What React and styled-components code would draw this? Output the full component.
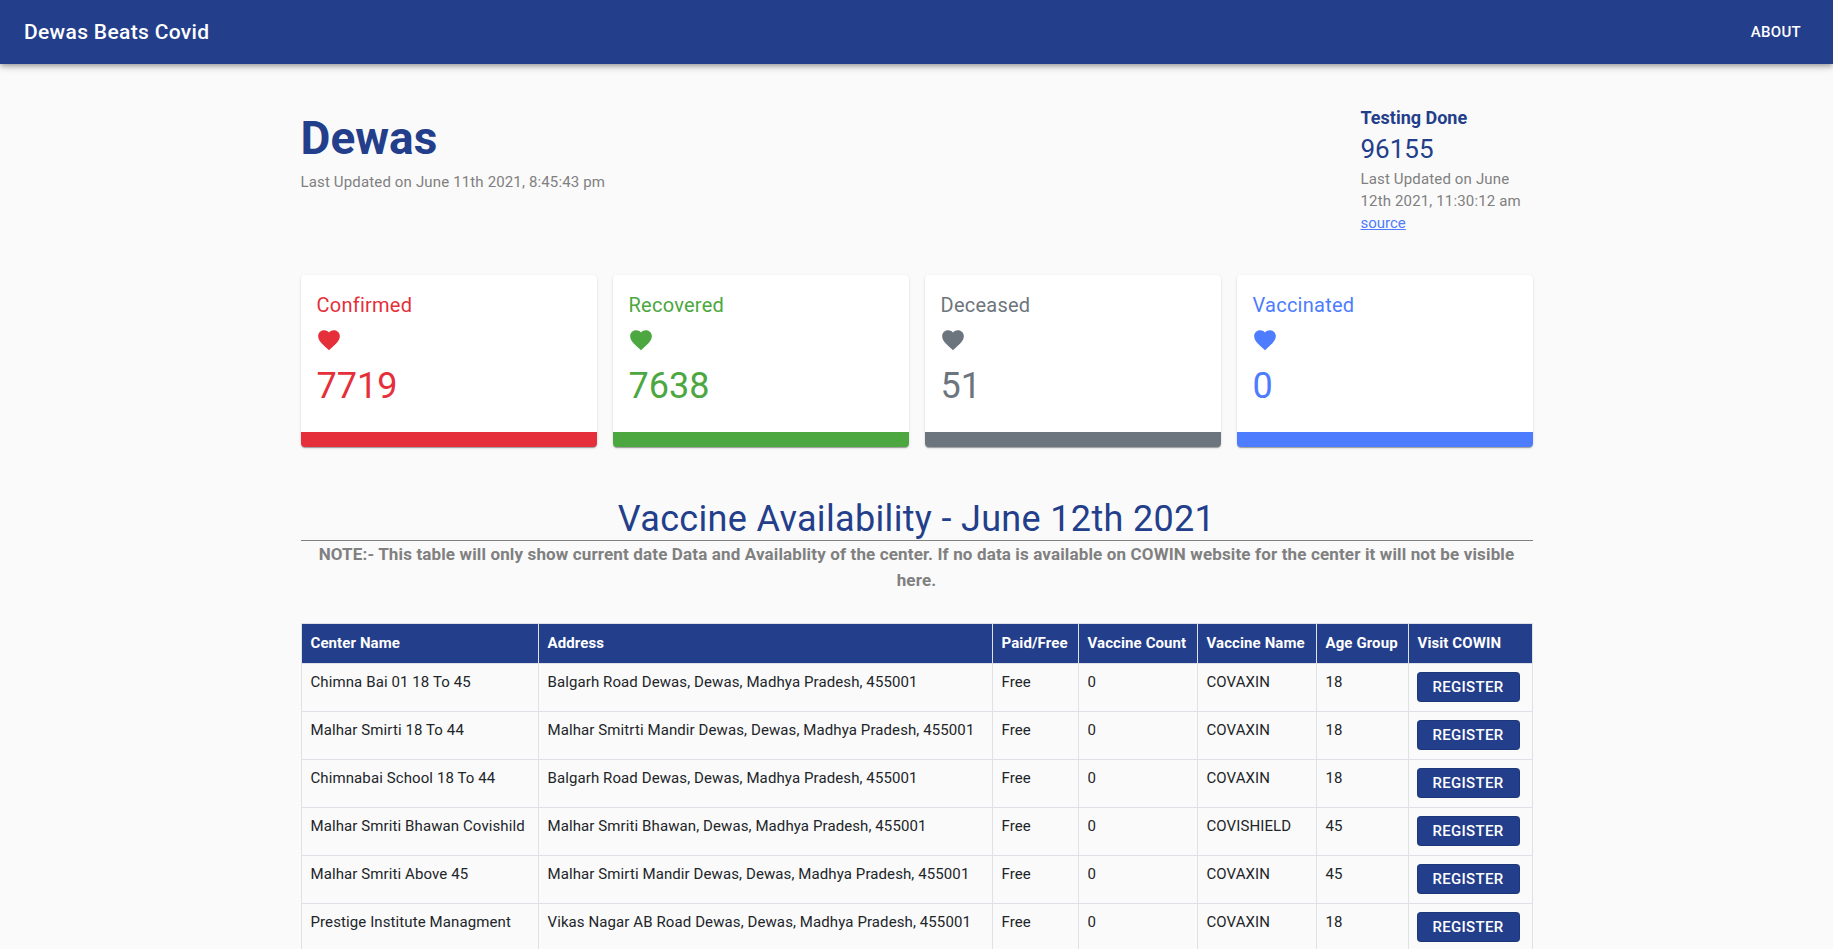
import styled, {createGlobalStyle} from 'styled-components';

const navy = '#233e8b';

const centers = [
  ['Chimna Bai 01 18 To 45', 'Balgarh Road Dewas, Dewas, Madhya Pradesh, 455001', 'COVAXIN', 18],
  ['Malhar Smirti 18 To 44', 'Malhar Smitrti Mandir Dewas, Dewas, Madhya Pradesh, 455001', 'COVAXIN', 18],
  ['Chimnabai School 18 To 44', 'Balgarh Road Dewas, Dewas, Madhya Pradesh, 455001', 'COVAXIN', 18],
  ['Malhar Smriti Bhawan Covishild', 'Malhar Smriti Bhawan, Dewas, Madhya Pradesh, 455001', 'COVISHIELD', 45],
  ['Malhar Smriti Above 45', 'Malhar Smirti Mandir Dewas, Dewas, Madhya Pradesh, 455001', 'COVAXIN', 45],
  ['Prestige Institute Managment', 'Vikas Nagar AB Road Dewas, Dewas, Madhya Pradesh, 455001', 'COVAXIN', 18],
];

const stats = [
  {label: 'Confirmed', value: 7719, color: '#e52f3a'},
  {label: 'Recovered', value: 7638, color: '#4ca741'},
  {label: 'Deceased', value: 51, color: '#6c757d'},
  {label: 'Vaccinated', value: 0, color: '#4d7cfe'},
];

const columns = [
  ['Center Name', 237],
  ['Address', 454],
  ['Paid/Free', 86],
  ['Vaccine Count', 119],
  ['Vaccine Name', 119],
  ['Age Group', 92],
  ['Visit COWIN', 124],
];

export default function App() {
  return (
    <>
      <GlobalStyle />
      <NavBar>
        <Brand>Dewas Beats Covid</Brand>
        <NavButton>About</NavButton>
      </NavBar>
      <Main>
        <Header>
          <div>
            <Title>Dewas</Title>
            <Muted>Last Updated on June 11th 2021, 8:45:43 pm</Muted>
          </div>
          <Testing>
            <TestingLabel>Testing Done</TestingLabel>
            <TestingValue>96155</TestingValue>
            <Muted>Last Updated on June 12th 2021, 11:30:12 am</Muted>
            <Source href="#">source</Source>
          </Testing>
        </Header>
        <Cards>
          {stats.map(stat => (
            <Card key={stat.label} $color={stat.color}>
              <CardBody>
                <CardLabel>{stat.label}</CardLabel>
                <Heart viewBox="0 0 24 24">
                  <path d="M12 21.35l-1.45-1.32C5.4 15.36 2 12.28 2 8.5 2 5.42 4.42 3 7.5 3c1.74 0 3.41.81 4.5 2.09C13.09 3.81 14.76 3 16.5 3 19.58 3 22 5.42 22 8.5c0 3.78-3.4 6.86-8.55 11.54L12 21.35z" />
                </Heart>
                <CardValue>{stat.value}</CardValue>
              </CardBody>
            </Card>
          ))}
        </Cards>
        <Heading>Vaccine Availability - June 12th 2021</Heading>
        <Note>
          NOTE:- This table will only show current date Data and Availablity of the center. If no data is available on
          COWIN website for the center it will not be visible here.
        </Note>
        <Table>
          <colgroup>
            {columns.map(([name, width]) => (
              <col key={name} width={width} />
            ))}
          </colgroup>
          <thead>
            <tr>
              {columns.map(([name]) => (
                <Th key={name}>{name}</Th>
              ))}
            </tr>
          </thead>
          <tbody>
            {centers.map(([name, address, vaccine, age]) => (
              <tr key={name}>
                <Td>{name}</Td>
                <Td>{address}</Td>
                <Td>Free</Td>
                <Td>0</Td>
                <Td>{vaccine}</Td>
                <Td>{age}</Td>
                <Td>
                  <RegisterButton>Register</RegisterButton>
                </Td>
              </tr>
            ))}
          </tbody>
        </Table>
      </Main>
    </>
  );
}

const GlobalStyle = createGlobalStyle`
  body {
    background: #fafafa;
    color: #212529;
    font-family: Roboto, "Liberation Sans", sans-serif;
    margin: 0;
  }
`;

const NavBar = styled.header`
  align-items: center;
  background: ${navy};
  box-shadow: 0 2px 4px -1px rgba(0, 0, 0, 0.2), 0 4px 5px 0 rgba(0, 0, 0, 0.14), 0 1px 10px 0 rgba(0, 0, 0, 0.12);
  color: #fff;
  display: flex;
  height: 64px;
  justify-content: space-between;
  padding: 0 24px;
`;

const Brand = styled.div`
  font-size: 21px;
  font-weight: 500;
  letter-spacing: 0.33px;
`;

const NavButton = styled.button`
  background: none;
  border: 0;
  color: #fff;
  font-family: inherit;
  font-size: 15px;
  font-weight: 500;
  letter-spacing: 0.3px;
  padding: 6px 8px;
  text-transform: uppercase;
`;

const Main = styled.main`
  margin: 0 auto;
  width: 1232px;
`;

const Header = styled.div`
  display: flex;
  justify-content: space-between;
  padding-top: 42px;
`;

const Title = styled.h1`
  color: ${navy};
  font-size: 46px;
  font-weight: 700;
  line-height: 62px;
  margin: 1px 0 2px;
`;

const Muted = styled.div`
  color: #808080;
  font-size: 15px;
  letter-spacing: 0.15px;
  line-height: 22px;
`;

const Testing = styled.div`
  width: 172px;
`;

const TestingLabel = styled.div`
  color: ${navy};
  font-size: 18px;
  font-weight: 700;
  line-height: 24px;
`;

const TestingValue = styled.div`
  color: ${navy};
  font-size: 26px;
  line-height: 38px;
`;

const Source = styled.a`
  color: #4d7cfe;
  display: block;
  font-size: 15px;
  line-height: 22px;
  text-decoration: underline;
`;

const Cards = styled.div`
  display: grid;
  gap: 16px;
  grid-template-columns: repeat(4, 1fr);
  margin-top: 41px;
`;

const Card = styled.div`
  background: #fff;
  border-bottom: 15px solid ${props => props.$color};
  border-radius: 4px;
  box-shadow: 0 2px 1px -1px rgba(0, 0, 0, 0.2), 0 1px 1px 0 rgba(0, 0, 0, 0.14), 0 1px 3px 0 rgba(0, 0, 0, 0.12);
  box-sizing: border-box;
  color: ${props => props.$color};
  height: 172px;
`;

const CardBody = styled.div`
  padding: 16px;
`;

const CardLabel = styled.div`
  font-size: 20px;
  letter-spacing: 0.25px;
  line-height: 29px;
`;

const Heart = styled.svg`
  display: block;
  fill: currentColor;
  height: 26px;
  margin-left: -1px;
  margin-top: 7px;
  width: 26px;
`;

const CardValue = styled.div`
  font-size: 36px;
  line-height: 54px;
  margin-top: 6px;
`;

const Heading = styled.h2`
  border-bottom: 1px solid #808080;
  color: ${navy};
  font-size: 36px;
  font-weight: 400;
  letter-spacing: 0.33px;
  line-height: 41px;
  margin: 52px 0 0;
  text-align: center;
`;

const Note = styled.p`
  color: #808080;
  font-size: 17px;
  font-weight: 700;
  letter-spacing: 0.14px;
  line-height: 26px;
  margin: 0;
  padding: 0 8px;
  text-align: center;
`;

const Table = styled.table`
  border-collapse: collapse;
  margin-top: 30px;
  table-layout: fixed;
  width: 1232px;
`;

const Th = styled.th`
  background: ${navy};
  border: 1px solid #dee2e6;
  box-sizing: border-box;
  color: #fff;
  font-size: 15px;
  font-weight: 700;
  height: 40px;
  letter-spacing: 0.1px;
  padding: 7px 8px 9px 9px;
  text-align: left;
  white-space: nowrap;
`;

const Td = styled.td`
  border: 1px solid #dee2e6;
  box-sizing: border-box;
  font-size: 15px;
  height: 48px;
  letter-spacing: 0.1px;
  line-height: 21px;
  padding: 8px 8px 8px 9px;
  vertical-align: top;
`;

const RegisterButton = styled.button`
  background: ${navy};
  border: 1px solid rgba(0, 0, 0, 0.12);
  border-radius: 4px;
  color: #fff;
  display: block;
  font-family: inherit;
  font-size: 15px;
  font-weight: 500;
  height: 30px;
  letter-spacing: 0.3px;
  margin-left: -1px;
  padding: 0;
  text-transform: uppercase;
  width: 103px;
`;
